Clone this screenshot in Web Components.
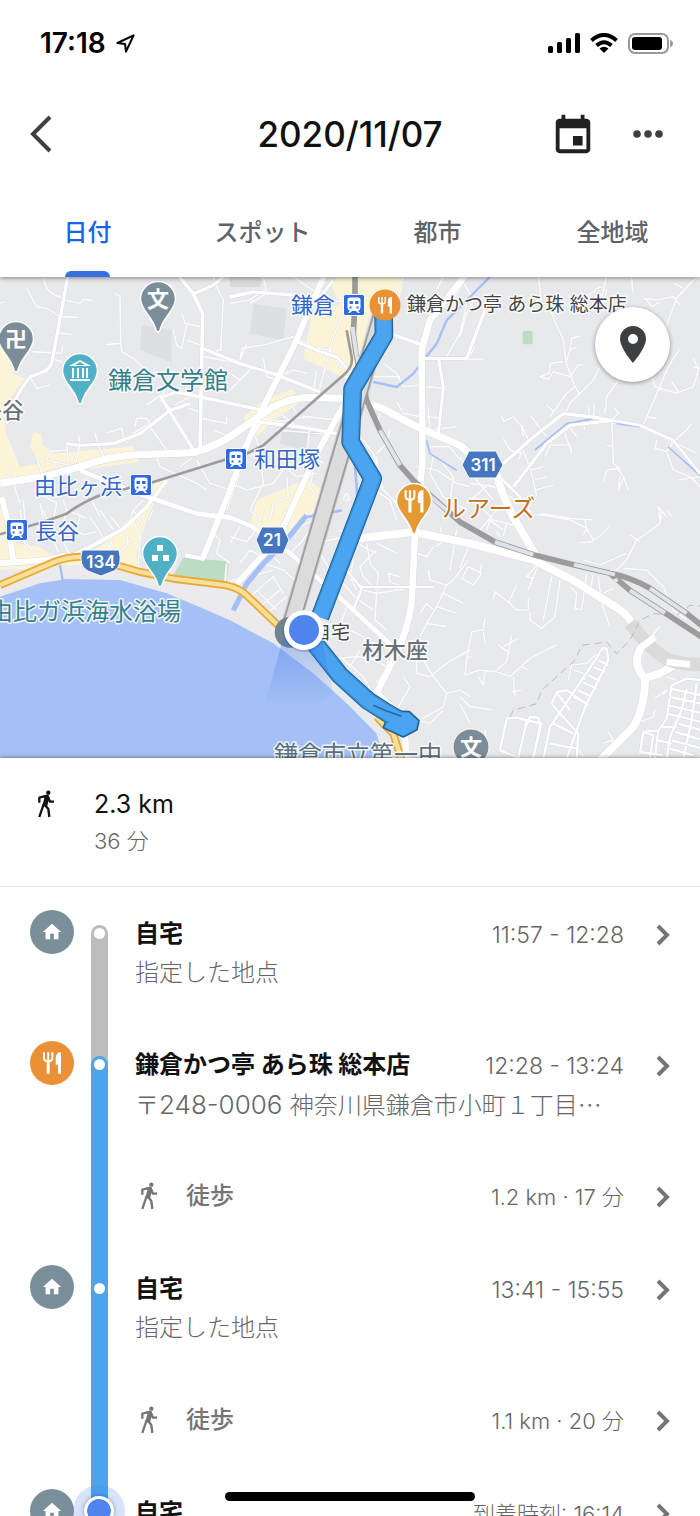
<!DOCTYPE html>
<html lang="ja">
<head>
<meta charset="utf-8">
<meta name="viewport" content="width=device-width, initial-scale=1">
<title>2020/11/07</title>
<style>
    html, body {
        height: 100%;
        margin: 0;
    }

    body {
        background: #fff;
        color: #111;
        font-family: Inter, "Noto Sans CJK JP", sans-serif;
        overflow: hidden;
    }

    .postcode {
        font-size: 26px;
    }

    /* the Japanese face centres the dots on the line */
    .dots {
        font-family: "Noto Sans CJK JP", sans-serif;
    }
</style>
</head>
<body>

<timeline-app>
    <status-bar slot="top" time="17:18"></status-bar>
    <title-bar slot="top">2020/11/07</title-bar>
    <tab-bar slot="top" tabs="日付,スポット,都市,全地域" active="0"></tab-bar>

    <route-map slot="map"></route-map>

    <trip-summary>
        2.3 km
        <span slot="time">36 分</span>
    </trip-summary>

    <trip-row icon="home" rail="gray">
        自宅
        <span slot="sub">指定した地点</span>
        <span slot="info">11:57 - 12:28</span>
    </trip-row>
    <trip-row icon="food" before="gray" rail="blue">
        鎌倉かつ亭 あら珠 総本店
        <span slot="sub">〒<span class="postcode">248-0006 </span>神奈川県鎌倉市小町１丁目<span class="dots">…</span></span>
        <span slot="info">12:28 - 13:24</span>
    </trip-row>
    <trip-row walk before="blue" rail="blue">
        徒歩
        <span slot="info">1.2 km · 17 分</span>
    </trip-row>
    <trip-row icon="home" before="blue" rail="blue">
        自宅
        <span slot="sub">指定した地点</span>
        <span slot="info">13:41 - 15:55</span>
    </trip-row>
    <trip-row walk before="blue" rail="blue">
        徒歩
        <span slot="info">1.1 km · 20 分</span>
    </trip-row>
    <trip-row icon="home" before="blue" current>
        自宅
        <span slot="sub">指定した地点</span>
        <span slot="info">到着時刻: 16:14</span>
    </trip-row>
</timeline-app>

<script>
    const ICONS = {
        walk: '<svg viewBox="-18 -2 84 84"><circle cx="31" cy="6" r="6.500"/><g fill="none" stroke="currentColor" stroke-width="7" stroke-linejoin="round"><path d="M28 15L4 21V36"/><path d="M29 17L36 33H48"/><path d="M17 40L4 79"/><path d="M21 43L31 55L34 79"/></g><path d="M16 14L31 12L34 21L27 48L13 46L19 22Z"/></svg>',
        home: '<svg viewBox="0 0 24 24"><path d="M10 20v-6h4v6h5v-8h3L12 3 2 12h3v8z"/></svg>',
        food: '<svg viewBox="0 0 54 65"><path d="M3 1V19Q3 28 15.500 28Q28 28 28 19V1M15.500 1V28" fill="none" stroke="currentColor" stroke-width="6"/><path d="M11 26h9v39h-9zM54 0V65H45V38H38V18Q38 2 54 0Z"/></svg>',
        back: '<svg viewBox="0 0 22 38"><path d="M20 2L3 19L20 36" fill="none" stroke="currentColor" stroke-width="4"/></svg>',
        calendar: '<svg viewBox="0 -1 24 24"><path d="M17 12h-5v5h5v-5zM16 1v2H8V1H6v2H5c-1.110 0-1.990.9-1.990 2L3 19c0 1.100.890 2 2 2h14c1.100 0 2-.9 2-2V5c0-1.100-.9-2-2-2h-1V1h-2zm3 18H5V8h14v11z"/></svg>',
        more: '<svg viewBox="0 0 30 8"><circle cx="4" cy="4" r="3.800"/><circle cx="15" cy="4" r="3.800"/><circle cx="26" cy="4" r="3.800"/></svg>',
        chevron: '<svg viewBox="0 0 14 22"><path d="M2 2L11 11L2 20" fill="none" stroke="currentColor" stroke-width="4"/></svg>',
        pin: '<svg viewBox="0 0 26 37"><path fill-rule="evenodd" d="M13 0A13 13 0 0 0 0 13C0 22 13 37 13 37S26 22 26 13A13 13 0 0 0 13 0ZM13 8A5 5 0 1 1 13 18A5 5 0 0 1 13 8Z"/></svg>',
        arrow: '<svg viewBox="0 0 20 20"><path d="M1.500 9.500L18.500 1.500L10.500 18.500L9.500 10.500Z" fill="none" stroke="currentColor" stroke-width="2.200" stroke-linejoin="round"/></svg>',
        signal: '<svg viewBox="0 0 32 20"><rect y="13" width="5" height="7" rx="1.500"/><rect x="9" y="9" width="5" height="11" rx="1.500"/><rect x="18" y="5" width="5" height="15" rx="1.500"/><rect x="27" width="5" height="20" rx="1.500"/></svg>',
        wifi: '<svg viewBox="0 0 28 20"><g fill="none" stroke="currentColor" stroke-width="4"><path d="M1.500 7.500Q14-3.500 26.500 7.500"/><path d="M6.500 12.500Q14 6 21.500 12.500"/></g><path d="M9.500 15.500Q14 12 18.500 15.500L14 20Z"/></svg>',
        battery: '<svg viewBox="0 0 45 21"><rect x="1" y="1" width="39" height="19" rx="6" fill="none" stroke="#999" stroke-width="2"/><rect x="4" y="4" width="30" height="13" rx="3"/><path d="M42 7Q45 8 45 10.500T42 14Z" fill="#999"/></svg>'
    };

    // Simple icon, sized with --size (width) and coloured by the text colour
    class AppIcon extends HTMLElement {
        connectedCallback() {
            if (this.shadowRoot) return;
            this.attachShadow({ mode: 'open' });
            this.shadowRoot.innerHTML = `
                <style>
                    :host { display: inline-flex; width: var(--size, 24px); flex: none; }
                    svg { display: block; width: 100%; height: auto; fill: currentColor; }
                </style>
                ${ICONS[this.getAttribute('name')] || ''}
            `;
        }
    }

    class TimelineApp extends HTMLElement {
        constructor() {
            super();
            this.attachShadow({ mode: 'open' });
            this.shadowRoot.innerHTML = `
                <style>
                    :host {
                        display: flex;
                        flex-direction: column;
                        height: 100vh;
                        position: relative;
                    }

                    header {
                        position: relative;
                        z-index: 1;
                        background: #fff;
                        box-shadow: 0 1px 5px rgba(0, 0, 0, 0.45);
                        flex: none;
                    }

                    .map {
                        flex: none;
                    }

                    main {
                        position: relative;
                        flex: 1;
                        min-height: 0;
                        overflow-y: auto;
                        scrollbar-width: none;
                        background: #fff;
                        box-shadow: 0 0 4px rgba(0, 0, 0, 0.5);
                    }

                    .home-bar {
                        position: absolute;
                        bottom: 15px;
                        left: 50%;
                        width: 250px;
                        height: 9px;
                        margin-left: -125px;
                        border-radius: 5px;
                        background: #000;
                    }
                </style>
                <header><slot name="top"></slot></header>
                <div class="map"><slot name="map"></slot></div>
                <main><slot></slot></main>
                <div class="home-bar"></div>
            `;
        }
    }

    class StatusBar extends HTMLElement {
        connectedCallback() {
            if (this.shadowRoot) return;
            this.attachShadow({ mode: 'open' });
            this.shadowRoot.innerHTML = `
                <style>
                    :host {
                        display: flex;
                        align-items: center;
                        gap: 10px;
                        height: 86px;
                        padding: 0 27px 0 40px;
                        color: #000;
                    }

                    .time {
                        font-size: 28px;
                        font-weight: 600;
                        margin-right: auto;
                        display: flex;
                        align-items: center;
                        gap: 10px;
                    }
                </style>
                <span class="time">${this.getAttribute('time')}<app-icon name="arrow" style="--size: 19px"></app-icon></span>
                <app-icon name="signal" style="--size: 32px"></app-icon>
                <app-icon name="wifi" style="--size: 28px"></app-icon>
                <app-icon name="battery" style="--size: 45px"></app-icon>
            `;
        }
    }

    class TitleBar extends HTMLElement {
        constructor() {
            super();
            this.attachShadow({ mode: 'open' });
            this.shadowRoot.innerHTML = `
                <style>
                    :host {
                        display: grid;
                        grid-template-columns: 1fr auto 1fr;
                        align-items: center;
                        height: 96px;
                        padding: 0 30px;
                    }

                    h1 {
                        margin: 0;
                        font-size: 35px;
                        font-weight: 500;
                    }

                    button {
                        display: flex;
                        padding: 0;
                        border: 0;
                        background: none;
                        color: #3c4043;
                    }

                    .actions {
                        display: flex;
                        justify-content: flex-end;
                        align-items: center;
                        gap: 37px;
                        padding-right: 7px;
                    }

                    .calendar {
                        color: #202124;
                    }
                </style>
                <button aria-label="戻る"><app-icon name="back" style="--size: 22px"></app-icon></button>
                <h1><slot></slot></h1>
                <div class="actions">
                    <button class="calendar" aria-label="カレンダー"><app-icon name="calendar" style="--size: 46px"></app-icon></button>
                    <button aria-label="その他"><app-icon name="more" style="--size: 30px"></app-icon></button>
                </div>
            `;
        }
    }

    class TabBar extends HTMLElement {
        connectedCallback() {
            if (this.shadowRoot) return;
            const active = Number(this.getAttribute('active'));
            const tabs = this.getAttribute('tabs').split(',');
            this.attachShadow({ mode: 'open' });
            this.shadowRoot.innerHTML = `
                <style>
                    :host {
                        display: grid;
                        grid-template-columns: repeat(4, 1fr);
                        height: 95px;
                    }

                    button {
                        display: flex;
                        flex-direction: column;
                        align-items: center;
                        justify-content: space-between;
                        padding: 31px 0 0;
                        border: 0;
                        background: none;
                        color: #5f6368;
                        font: 500 24px/40px Inter, "Noto Sans CJK JP", sans-serif;
                    }

                    [aria-selected="true"] {
                        color: #1a66e0;
                    }

                    [aria-selected="true"]::after {
                        content: "";
                        width: 45px;
                        height: 6px;
                        border-radius: 6px 6px 0 0;
                        background: #356fe0;
                    }
                </style>
                ${tabs.map((tab, i) => `<button role="tab" aria-selected="${i === active}">${tab}</button>`).join('')}
            `;
        }
    }

    class TripSummary extends HTMLElement {
        constructor() {
            super();
            this.attachShadow({ mode: 'open' });
            this.shadowRoot.innerHTML = `
                <style>
                    :host {
                        display: flex;
                        gap: 34px;
                        padding: 27px 32px;
                        border-bottom: 1px solid #e3e3e3;
                    }

                    app-icon {
                        margin-top: 5px;
                        height: 28px;
                    }

                    .distance {
                        font-size: 25px;
                        line-height: 39px;
                    }

                    .time {
                        font-size: 22px;
                        line-height: 35px;
                        font-weight: 300;
                        color: #666;
                    }
                </style>
                <app-icon name="walk" style="--size: 28px"></app-icon>
                <div>
                    <div class="distance"><slot></slot></div>
                    <div class="time"><slot name="time"></slot></div>
                </div>
            `;
        }
    }

    class TripRow extends HTMLElement {
        connectedCallback() {
            if (this.shadowRoot) return;
            const icon = this.getAttribute('icon');
            const walk = this.hasAttribute('walk');
            const current = this.hasAttribute('current');
            this.attachShadow({ mode: 'open' });
            this.shadowRoot.innerHTML = `
                <style>
                    :host {
                        --gray: #bdbdbd;
                        --blue: #4ba5ee;
                        display: block;
                    }

                    a {
                        display: flex;
                        height: 131px;
                        padding: 0 30px;
                        color: inherit;
                        text-decoration: none;
                    }

                    :host([walk]) a {
                        height: 93px;
                    }

                    .badge {
                        display: flex;
                        align-items: center;
                        justify-content: center;
                        flex: none;
                        width: 44px;
                        height: 44px;
                        margin-top: 23px;
                        border-radius: 50%;
                        color: #fff;
                        background: #7b8f9b;
                    }

                    .badge.food {
                        background: #ea9035;
                    }

                    .badge.none {
                        visibility: hidden;
                    }

                    .rail {
                        display: flex;
                        flex-direction: column;
                        flex: none;
                        width: 17px;
                        margin: 0 27px 0 17px;
                    }

                    .before {
                        height: 46px;
                        background: var(--before, transparent);
                    }

                    .after {
                        position: relative;
                        flex: 1;
                        margin-top: -8px;
                        border-radius: 9px 9px 0 0;
                        background: var(--rail, transparent);
                    }

                    :host([before="gray"]) { --before: var(--gray); }
                    :host([before="blue"]) { --before: var(--blue); }
                    :host([rail="gray"]) { --rail: var(--gray); }
                    :host([rail="blue"]) { --rail: var(--blue); }

                    .dot {
                        position: absolute;
                        top: 3px;
                        left: 3px;
                        width: 11px;
                        height: 11px;
                        border-radius: 50%;
                        background: #fff;
                    }

                    .dot.now {
                        top: -8px;
                        left: -7px;
                        width: 24px;
                        height: 24px;
                        border: 3px solid #fff;
                        background: #4f83ee;
                        box-shadow: 0 0 0 11px rgba(79, 131, 238, 0.22), 0 0 5px rgba(0, 0, 0, 0.4);
                        background-clip: padding-box;
                    }

                    .text {
                        display: grid;
                        grid-template-columns: minmax(0, 1fr) auto;
                        grid-auto-rows: 39px;
                        flex: 1;
                        min-width: 0;
                        padding-top: 27px;
                        line-height: 39px;
                        white-space: nowrap;
                    }

                    .name {
                        display: flex;
                        align-items: center;
                        gap: 23px;
                        font-size: 24px;
                        font-weight: 700;
                    }

                    :host([walk]) .name {
                        color: #757575;
                        font-weight: 500;
                    }

                    .info {
                        font-size: 23px;
                        line-height: 43px;
                        color: #666;
                        font-weight: 300;
                    }

                    :host([walk]) .info,
                    :host([current]) .info {
                        font-size: 22px;
                    }

                    .sub {
                        grid-column: 1 / -1;
                        font-size: 24px;
                        font-weight: 300;
                        color: #666;
                        overflow: hidden;
                    }

                    .chevron {
                        align-self: flex-start;
                        margin: 37px 0 0 32px;
                        color: #757575;
                    }
                </style>
                <a href="#">
                    <span class="badge ${icon || 'none'}">
                        ${icon ? `<app-icon name="${icon}" style="--size: ${icon === 'food' ? 18 : 22}px"></app-icon>` : ''}
                    </span>
                    <span class="rail">
                        <span class="before"></span>
                        <span class="after">${walk ? '' : `<span class="dot ${current ? 'now' : ''}"></span>`}</span>
                    </span>
                    <span class="text">
                        <span class="name">${walk ? '<app-icon name="walk" style="--size: 28px"></app-icon>' : ''}<span><slot></slot></span></span>
                        <span class="info"><slot name="info"></slot></span>
                        ${walk ? '' : '<span class="sub"><slot name="sub"></slot></span>'}
                    </span>
                    <app-icon class="chevron" name="chevron" style="--size: 14px"></app-icon>
                </a>
            `;
        }
    }

    // ---- map data, three units to the pixel ----

    const MAIN_ROADS = [
        [22, 'M0 619L130 599L240 569Q330 537 420 533L580 527Q660 504 710 465L790 409Q850 364 930 361L1030 364Q1110 380 1150 395L1250 449L1380 505L1445 560'],
        [24, 'M1490 590Q1500 640 1540 720L1610 840'],
        [24, 'M1060 786L1240 765L1410 799L1600 849Q1640 870 1720 910L1860 999Q1890 1020 1900 1050'],
        [20, 'M1400 -10L1290 129L1265 220L1267 560L1245 769L1235 979Q1225 1050 1190 1129L1130 1249L1210 1319L1220 1443'],
        [24, 'M1940 1089Q1885 1150 1935 1205Q1935 1290 1900 1350L1800 1450M1930 1205L1980 1189L2030 1162L2070 1160'],
        [18, 'M975 -10L880 210L780 409L730 530L690 640L610 840'],
        [18, 'M1040 370L950 530L860 729L830 790L710 920'],
        [10, 'M205 -10L155 260L140 280L90 300Q40 360 20 440'],
        [11, 'M530 -10L580 50L608 110L600 520'],
        [10, 'M480 355L585 527M490 359L530 345L720 385L790 400'],
        [10, 'M580 50L640 25L680 -10M610 215L720 260L820 290L960 345'],
        [10, 'M200 500L240 505L340 500L420 470L510 400L570 380'],
        [14, 'M240 580L430 655L590 710L690 722L750 745L870 829L1060 999L1180 1110'],
        [18, 'M0 859L130 850L200 835M5 660L25 740L40 855'],
        [12, 'M210 840L280 805L370 755L440 690L500 610M655 720L610 845L555 835'],
        [10, 'M690 60L760 45L960 60L1000 10M880 190L950 220L1010 240L1090 330'],
        [10, 'M1170 170L1270 205M1265 245L1400 244L1470 60'],
        [10, 'M1510 560L1600 480L1690 410L1780 420L1838 430M1540 630L1640 500L1710 445L1838 430'],
        [10, 'M690 570L780 440M780 435L900 450L1010 470'],
        [9, 'M1315 240L1330 330L1315 470'],
        [8, 'M1838 430L1920 445L2020 490L2100 590M1500 600L1560 660L1600 720'],
        [8, 'M1080 930L1300 930M1060 999L1085 935L1040 880L1010 850']
    ];

    // lanes, one list per sheet: [left, top, lines]
    const LANES = [
        [0, -21, `M80 55L110 110L140 115L180 140L235 142 M130 20Q135 70 180 80L195 90L240 100L250 88L280 92 M170 188L215 194
            M345 70L360 80L362 220L318 224 M362 220L365 245L400 265L450 310 M95 245L185 250L188 225 M150 265L185 275
            M90 320L110 355L150 345 M440 405L490 370 M500 350L480 390L520 420 M525 405L580 375 M545 130L555 160L610 172
            M520 180L530 225L545 235L560 165 M560 210L600 225 M640 20L655 60L670 90L662 240L640 245 M610 260L690 275
            M660 290L720 330 M605 445L680 460L680 440 M565 415L600 425 M320 490L365 475L370 505 M405 470L410 445L440 445L450 460L400 490
            M450 470L500 540 M200 520L205 580 M235 495L240 520L225 590L140 570L150 545L200 540 M165 575L170 600
            M110 560L125 610L240 600 M310 535L345 560L350 580 M285 490L300 540L320 570 M20 600L40 640L60 700
            M70 690L75 750 M120 700L130 745 M100 660L170 700L160 750 M190 690L200 720L260 745 M270 680L300 740
            M430 690L400 720L390 750 M470 560L480 590L590 640L620 660 M590 570L630 640L690 660 M540 590L575 565
            M700 560L720 610L680 720 M0 100L15 95 M640 480L690 500L720 470`],
        [690, -21, `M100 20L110 70L60 100 M0 100L60 90L100 60L190 80 M190 20L290 90L340 95 M30 270L35 235L100 225L190 200
            M50 220L30 270 M100 265L110 320L130 325 M0 360L70 290 M140 320L190 300L230 310 M190 200L260 235L300 240
            M340 130L310 200L265 370 M300 240L330 290L360 300 M260 300L250 370 M0 400L80 420 M60 440L150 455L230 440L320 450
            M130 400L180 395L200 430 M150 430L200 470 M70 480L90 540L60 560 M140 480L320 495 M240 470L230 550L280 580
            M150 580L200 620L260 610 M0 640L50 660L130 640L160 600 M90 560L100 640L60 720L90 750 M170 620L175 680L130 700L120 750
            M250 600L240 650L270 690L230 750 M460 280L500 310L520 350L570 345 M430 320L510 320 M500 395L520 430L570 440
            M510 440L560 470 M450 430L440 480 M480 480L470 520L440 550 M390 500L430 550L460 660 M440 560L450 650L500 700
            M590 440L640 445 M590 350L640 355 M600 480L680 470 M595 410L600 480 M640 20L610 80L660 100L700 40
            M650 260L690 190L710 100 M560 590L620 600L680 640L720 650 M610 560L600 610L640 680L710 720 M600 530L660 530L690 570
            M400 640L480 690L500 750 M340 690Q350 650 358 690L345 692 M520 20L500 60L480 200 M630 570L670 620L660 700`],
        [1380, -21, `M235 20L245 100L275 130L290 165L310 210L318 275L345 350L360 375 M318 275L330 240L335 205L360 198 M330 240L350 232
            M310 275L270 280L268 310L240 320L265 328L280 305L330 320L355 285L370 285 M345 350L320 370L270 440 M260 405L280 425
            M420 290L400 330L330 400L315 430 M475 330L440 380L435 430 M425 80L440 20 M385 80L430 100L440 60L420 50L380 80
            M515 20L518 65 M715 20L690 40L650 85L615 180 M550 85L590 90L640 80L660 105 M640 40L670 55 M555 85L575 110L600 95
            M660 235L625 290L550 465 M575 320L585 350L650 370L700 350L715 300L700 265 M635 335L655 365 M700 290L720 295
            M560 440L590 445 M465 415L475 430L455 450L460 580L480 595L440 600L430 635 M470 590L490 620L505 660 M490 625L475 660L480 620
            M440 525L460 530 M385 405L388 435 M402 400L402 435 M540 470L640 515L680 480L695 460 M590 510L585 535L620 545L640 515L710 550
            M620 545L640 600L690 620L720 650 M655 630L720 620 M210 435L260 500 M185 465L205 510 M125 435L130 455L160 440L185 470L190 500
            M130 505L150 540L185 550L175 570 M335 550L330 525L270 525L255 560 M330 470L350 500 M310 480L335 545 M375 460L372 480
            M190 540L215 610L230 680 M225 630L260 620 M215 600L250 590 M225 660L280 645 M0 20L40 90L20 130L0 200 M0 268L70 268 M25 265L45 230
            M0 560L40 620L100 690 M30 640L100 650L180 700 M20 700L90 640 M240 730L330 745L400 750 M600 750L595 710L620 740`],
        [0, 699, `M60 0L75 100L110 130 M130 0L160 80L175 130 M0 90L30 60 M240 20L230 60L250 75L290 65 M270 20L330 115L335 90
            M330 20L380 75L385 110 M300 0L340 60 M400 30L420 80L415 170 M390 90L360 130 M200 0L180 80L210 135
            M400 0L430 50 M460 0L445 30 M640 70L660 90L650 130L690 160 M720 50L690 100 M680 160L675 220 M720 200L690 215`],
        [690, 699, `M0 80L50 95L80 60L100 0 M30 160L60 120L120 150 M60 200L130 180 M100 160L160 180L240 250 M60 260L130 200L160 250
            M80 240L140 300 M90 290L150 240 M110 310L170 260 M160 0L190 60L250 30 M180 130L215 95L240 60 M120 130L150 160
            M210 170L200 240 M250 100L350 80L390 60 M270 130L300 180 M330 60L400 110L440 130 M340 220L380 265L430 300
            M350 290L330 350L300 380 M395 240L440 250L530 235 M410 100L420 160L445 190L440 240L400 200L390 170L440 120
            M440 100L500 130 M540 110L545 120 M520 230L480 215L475 190L510 200 M440 245L435 330L470 360 M380 240L360 200L370 150
            M595 180L600 210L650 225L670 210L715 150 M650 225L620 290L590 340L570 380 M620 290L680 310 M640 250L700 280
            M590 340L650 350 M610 300L590 280L570 310 M560 130L590 140L610 110 M630 50L640 90L620 110 M680 60L660 180
            M580 450L610 500L650 550L640 590L570 630 M650 550L690 540L720 560 M480 400L470 470L440 520 M390 420L360 470L320 490
            M330 440L400 500L430 560L410 590 M280 450L380 440L440 450L480 480 M340 350L400 380L420 440 M500 430L560 450L560 490L600 500L650 460L720 420
            M440 550L500 600L540 530L520 500 M560 630L600 640L640 600 M690 580L720 640`],
        [1380, 699, `M60 60L110 0 M80 60L90 30L130 60 M110 65L120 80 M130 80L140 40L170 50 M70 0L100 30L160 45 M160 10L240 15L330 30L380 55L400 90L430 70L450 45
            M375 30L380 55L370 75 M360 98L400 95 M605 0L600 40L560 70L530 90L500 150L470 180L400 185 M510 75L540 95 M620 0L635 20
            M0 175L25 110 M5 205L25 170L65 190L40 225Z M65 160L60 190 M100 270L105 245L150 280L170 300L205 300L205 265 M145 280L170 225
            M235 160L200 200L220 205 M235 165L205 240 M275 200L250 330 M300 210L285 320L245 355L210 330L210 305 M380 190L365 300L345 295L350 250L330 230
            M370 150L420 165L500 130 M415 200L425 280L450 350 M430 250L460 235 M400 195L390 240L370 240 M490 175L560 180L610 230L640 300L680 330
            M75 325L70 360L35 365L20 450L15 495L60 480L110 485L150 500L210 445L290 405 M70 365L75 400 M20 445L35 440 M110 480L140 455L155 375
            M130 410L175 385 M115 405L150 430 M55 500L70 525L75 480 M160 500L165 560 M155 545L185 540 M185 470L205 480 M0 560L30 590L100 600
            M325 510L335 465L380 460L400 440L440 415 M340 480L370 490L375 510 M600 350L560 395 M585 565L620 540L610 555 M530 640L580 620L585 600
            M430 700L460 690L445 665 M460 690L470 720 M350 710L370 740 M75 660L80 700 M620 500L650 510`]
    ];

    // the terraced housing blocks in the lower right
    const BLOCKS = `M1500 1420L1520 1325L1550 1322L1625 1340L1598 1445M1500 1420L1560 1443M1555 1322L1580 1332L1555 1443
        M1580 1345L1590 1320L1615 1322L1620 1345L1600 1445M1630 1445L1650 1350L1795 1135Q1805 1105 1820 1115L1825 1150L1755 1290L1700 1445
        M1655 1280L1670 1245L1700 1240L1765 1285M1655 1280L1735 1370L1730 1445M1672 1250L1710 1300M1650 1400L1730 1415M1660 1340L1720 1370
        M1795 1150L1825 1165M1780 1170L1815 1185M1765 1195L1800 1212M1750 1217L1790 1235M1735 1240L1775 1258M1720 1260L1762 1280
        M1920 1430L1930 1365L1975 1360L2000 1325L2015 1225L2060 1205L2110 1210M1930 1365L1960 1375L1950 1443
        M1975 1360L1965 1443M2060 1235L2045 1300L2010 1380L2000 1445M2010 1235L2105 1255M2010 1260L2105 1280M2005 1285L2105 1308
        M2002 1310L2105 1335M2035 1340L2105 1360M2025 1365L2105 1388M2015 1390L2105 1414M2010 1415L2080 1435M2090 1220L2075 1330L2050 1443M1985 1350L2030 1350M1975 1390L2015 1400M1920 1425L1990 1435`;

    const RAIL = 'M1065 -5L1065 80L1060 170L1068 230L1100 370L1140 460L1200 565L1240 610L1380 735L1485 795L1600 833L1720 863L1830 889Q1890 900 1950 934L2060 1009L2110 1050';
    const RAIL_BRANCH = 'M1830 889L1890 940L1990 1005L2110 1083';
    const ENODEN = 'M0 772L130 735L200 710Q240 680 300 655L460 615L670 550L740 530L790 505L1030 295Q1060 270 1055 240L1040 160';
    const HIGHWAY = 'M0 924L150 860Q230 825 300 850L420 885L520 905L680 925Q720 935 740 955L850 1060M1130 1320L1180 1370L1205 1450';
    const ROUTE = 'M1150 80L1152 175L1058 335L1052 495L1118 605L960 1020M912 1059L1020 1195L1105 1272L1160 1307L1205 1333';

    const pin = (x, y, color, inner) => `
        <g transform="translate(${x} ${y})">
            <path d="M-17.500 0A17.500 17.500 0 1 1 17.500 0C17.500 11 5 18 2 31Q0 35-2 31C-5 18-17.500 11-17.500 0Z" fill="${color}" stroke="#fff" stroke-width="1.500"/>
            ${inner}
        </g>`;

    const station = (x, y) => `
        <g transform="translate(${x} ${y})">
            <rect x="-10.500" y="-10.500" width="21" height="21" rx="2" fill="#2e6ae0" stroke="#fff"/>
            <path d="M-4-7.500H4Q6.500-7.500 6.500-5V2.500Q6.500 5 4 5.500L6 8H4L2 6H-2L-4 8H-6L-4 5.500Q-6.500 5-6.500 2.500V-5Q-6.500-7.500-4-7.500Z" fill="#fff"/>
            <path d="M-4.500-4H-1V-1H-4.500ZM1-4H4.500V-1H1ZM-4.500 1.500H-2.500V3.500H-4.500ZM2.500 1.500H4.500V3.500H2.500Z" fill="#2e6ae0"/>
        </g>`;

    const cutlery = (x, y, size) => `
        <g transform="translate(${x} ${y}) scale(${size})" fill="#fff">
            <path d="M-24-31V-13Q-24-4-11.500-4Q1-4 1-13V-31M-11.500-31V-4" fill="none" stroke="#fff" stroke-width="6"/>
            <path d="M-16-6h9v39h-9zM27-32V33H18V6H11V-14Q11-30 27-32Z"/>
        </g>`;

    class RouteMap extends HTMLElement {
        constructor() {
            super();
            this.attachShadow({ mode: 'open' });
            this.shadowRoot.innerHTML = `
                <style>
                    :host {
                        display: block;
                        position: relative;
                    }

                    svg {
                        display: block;
                        width: 100%;
                        height: auto;
                        background: #e8e9ed;
                    }

                    .line {
                        fill: none;
                        stroke-linejoin: round;
                    }

                    text {
                        font-family: Inter, "Noto Sans CJK JP", sans-serif;
                        font-size: 24px;
                        fill: #357f8c;
                        paint-order: stroke;
                        stroke: rgba(255, 255, 255, 0.85);
                        stroke-width: 3px;
                        stroke-linejoin: round;
                    }

                    .station { font-size: 22px; fill: #3467c8; }
                    .place { font-size: 19px; fill: #444; }
                    .area { font-size: 22px; font-weight: 500; fill: #687079; }
                    .school { fill: #5c6f7b; }
                    .shop { fill: #c4701a; }
                    .sign { font-size: 17px; font-weight: 600; fill: #fff; stroke: none; text-anchor: middle; }
                    .glyph { font-size: 22px; font-weight: 700; fill: #fff; stroke: none; text-anchor: middle; }

                    button {
                        position: absolute;
                        top: 30px;
                        right: 30px;
                        display: flex;
                        align-items: center;
                        justify-content: center;
                        width: 75px;
                        height: 75px;
                        padding: 0;
                        border: 0;
                        border-radius: 50%;
                        background: #fff;
                        color: #3c4043;
                        box-shadow: 0 1px 4px rgba(0, 0, 0, 0.4);
                    }
                </style>
                <svg viewBox="0 0 700 481">
                    <defs>
                        <linearGradient id="beam" x1="0" y1="0" x2="0" y2="1">
                            <stop offset="0" stop-color="#3f78e8" stop-opacity=".4"/>
                            <stop offset=".9" stop-color="#3f78e8" stop-opacity="0"/>
                        </linearGradient>
                    </defs>
                    <g transform="scale(.33333)">
                        <!-- land use -->
                        <g fill="#fbf4d6">
                            <path d="M0 160L20 200L40 290L75 305L20 380L15 460L60 570L120 560L90 510L100 465L125 470L125 500L165 530L400 508L418 555L240 580L0 615Z"/>
                            <path d="M1020 -5H1215L1190 100L1110 110L1070 270L1050 310L910 245L935 115L1020 80L990 20Z"/>
                            <path d="M730 420L790 370L880 335L895 380L820 430L770 480Z"/>
                            <path d="M750 740L770 670L920 605L970 640L900 760L830 800Z"/>
                            <path d="M0 880V830L60 800L120 810L180 850L300 810L370 740L450 680L460 620L490 610L440 730L410 830L420 880L300 850L150 870Z"/>
                            <path d="M240 850L300 885L520 935L420 910L290 895L150 885Z"/>
                            <path d="M0 690L30 740L60 830L0 840Z"/>
                        </g>
                        <path d="M425 145L515 160V257L420 219Z M760 80L860 95L850 190L750 170Z M850 450L930 460L920 520L840 500Z" fill="#dedfe3"/>
                        <path d="M0 925L150 870L300 860L680 935L740 960L860 1070L960 1180L820 1099L620 1000L0 975Z" fill="#ebebed"/>
                        <path d="M550 842L687 853L680 915L520 895Z" fill="#bcdcc4"/>
                        <rect x="1568" y="161" width="30" height="41" rx="8" fill="#bcdcc4"/>
                        <path d="M1130 1080L1160 1100L1140 1130Z" fill="#bcdcc4"/>
                        <path d="M0 959L120 919L200 906L360 909L500 949L620 999L690 1030L820 1099L940 1189L1040 1279L1130 1370L1150 1443H0Z" fill="#a4c0f6"/>
                        <!-- roads: a thin casing, then the white surface -->
                        <g class="line">
                            ${LANES.map(([x, y, d]) => `<path transform="translate(${x} ${y})" d="${d}" stroke="#dcdde2" stroke-width="7"/>`).join('')}
                            ${LANES.map(([x, y, d]) => `<path transform="translate(${x} ${y})" d="${d}" stroke="#fbfbfc" stroke-width="5"/>`).join('')}
                        </g>
                        <!-- rivers -->
                        <g class="line" stroke="#a4c0f6">
                            <path stroke-width="16" d="M920 715L850 800L790 860L740 920L700 1000"/>
                            <path stroke-width="8" d="M1025 700L920 720M1060 500L1075 700"/>
                            <path stroke-width="7" d="M1470 -1L1410 60L1340 130L1310 200L1270 250L1240 290L1190 330L1120 315M180 864L188 909"/>
                            <path stroke-width="5" d="M1605 519L1700 440L1780 425M1850 440L1920 450M2005 510L2100 595M1280 490L1290 530L1370 580M0 660L30 730"/>
                        </g>
                        <g class="line">
                            ${MAIN_ROADS.map(([w, d]) => `<path d="${d}" stroke="#d2d4d9" stroke-width="${w + 2}"/>`).join('')}
                            ${MAIN_ROADS.map(([w, d]) => `<path d="${d}" stroke="#fff" stroke-width="${w}"/>`).join('')}
                            <path d="${BLOCKS}" stroke="#d9dbdf" stroke-width="10"/>
                            <path d="${BLOCKS}" stroke="#fff" stroke-width="7"/>
                            <path d="M1890 1038Q1960 1130 2010 1150Q2060 1165 2110 1162" stroke="#dadada" stroke-width="40"/>
                            <path d="M1925 1110L1965 1080M2000 1155L2070 1162" stroke="#fff" stroke-width="20"/>
                            <path d="M1530 1320L1540 1300L1610 1280L1625 1240L1725 1150L1745 1105L1820 1095L1850 1130L1890 1090L1920 1030L1960 1010L2030 1015L2070 985L2110 988" stroke="#bbb" stroke-width="3" stroke-dasharray="22 14"/>
                            <path d="${HIGHWAY}" stroke="#e9aa38" stroke-width="24"/>
                            <path d="${HIGHWAY}" stroke="#f8e09a" stroke-width="13"/>
                            <path d="${ENODEN}" stroke="#9c9c9c" stroke-width="8"/>
                            <path d="${RAIL}" stroke="#9c9c9c" stroke-width="17"/>
                            <path d="${RAIL_BRANCH}" stroke="#9c9c9c" stroke-width="17"/>
                            <path d="M1058 150L1060 170L1070 235L1085 300M1140 460L1200 565M1270 640L1350 708M1485 795L1600 833M1722 863L1845 893M1950 934L2060 1009M1845 905L1850 915M1890 940L1995 1008" stroke="#dfe3ea" stroke-width="12"/>
                        </g>
                        <path d="M690 0H780Q790 15 780 30H690Z" fill="#d8d9dc"/>
                        <!-- travelled lines -->
                        <g class="line">
                            <path d="M1155 80L868 1059" stroke="#8c8c8c" stroke-width="58" opacity=".35"/>
                            <path d="M1155 80L868 1059" stroke="#9d9d9d" stroke-width="52"/>
                            <path d="M1155 80L868 1059" stroke="#dcdcdc" stroke-width="42"/>
                            <circle cx="870" cy="1066" r="46" fill="#70838f"/>
                            <path d="${ROUTE}" stroke="#1f6296" stroke-width="56"/>
                            <path d="M1170 1302L1228 1304L1257 1331L1251 1358L1210 1380L1150 1352Z" fill="#4aa4ef" stroke="#1f6296" stroke-width="5"/>
                            <path d="${ROUTE}" stroke="#388fd6" stroke-width="50"/>
                            <path d="${ROUTE}" stroke="#4aa4ef" stroke-width="42"/>
                            <path d="M1170 1308L1226 1308L1252 1332L1247 1355L1210 1375L1165 1352Z" fill="#4aa4ef"/>
                            <path d="M1120 1285L1160 1302L1205 1318" stroke="#26699f" stroke-width="5"/>
                        </g>
                        <path d="M850 1080L790 1300Q900 1340 1000 1250L965 1080Z" fill="url(#beam)"/>
                    </g>

                    <!-- labels and markers -->
                    <text class="station" x="291" y="36">鎌倉</text>
                    <text class="place" x="407" y="34">鎌倉かつ亭 あら珠 総本店</text>
                    <text x="108" y="112">鎌倉文学館</text>
                    <text class="area" x="-20" y="141">長谷</text>
                    <text class="station" x="254" y="190">和田塚</text>
                    <text class="station" x="34" y="217">由比ヶ浜</text>
                    <text class="station" x="35" y="262">長谷</text>
                    <text class="shop" x="442" y="240">ルアーズ</text>
                    <text x="-11" y="343">由比ガ浜海水浴場</text>
                    <text class="place" x="312" y="362">自宅</text>
                    <text class="area" x="362" y="381">材木座</text>
                    <text class="school" x="274" y="486">鎌倉市立第一中</text>

                    ${station(354, 28)}
                    ${station(236, 182)}
                    ${station(141, 208)}
                    ${station(17, 253)}

                    <g fill="#4676c0" stroke="#fff">
                        <path d="M469 174H496L503 188L496 201H469L462 188Z"/>
                        <path d="M262 250H283L289 263L283 277H262L256 263Z"/>
                        <path d="M82 273H119Q123 289 114 294Q106 297 101 299Q95 297 88 294Q78 289 82 273Z"/>
                    </g>
                    <text class="sign" x="483" y="194">311</text>
                    <text class="sign" x="272" y="269">21</text>
                    <text class="sign" x="101" y="291">134</text>

                    ${pin(158, 22, '#7b8d98', '<text class="glyph" y="8">文</text>')}
                    ${pin(16, 62, '#7b8d98', '<text class="glyph" y="8">卍</text>')}
                    ${pin(80, 94, '#50b0c6', '<path d="M-11-5L0-11L11-5ZM-10 8H10V10H-10ZM-8-3H-6V7H-8ZM-3-3H-1V7H-3ZM2-3H4V7H2ZM6-3H8V7H6Z" fill="#fff"/><path d="M-5-6L0-9L5-6Z" fill="#50b0c6"/>')}
                    ${pin(160, 277, '#50b0c6', '<path d="M-3-9H3V-3H-3ZM-8 1H-2V7H-8ZM3 1H9V7H3Z" fill="#fff"/>')}
                    ${pin(414, 224, '#e39a33', cutlery(0, 0, .35))}
                    <circle cx="471" cy="470" r="18" fill="#7b8d98" stroke="#fff"/>
                    <text class="glyph" x="471" y="478">文</text>
                    <circle cx="385" cy="28" r="15.500" fill="#ea9035"/>
                    ${cutlery(385, 28, .26)}
                    <circle cx="304" cy="354" r="21" fill="#000" opacity=".15"/>
                    <circle cx="304" cy="353" r="20" fill="#fff"/>
                    <circle cx="304" cy="353" r="15" fill="#4f83ee"/>
                </svg>
                <button aria-label="スポットを表示"><app-icon name="pin" style="--size: 26px"></app-icon></button>
            `;
        }
    }

    customElements.define('app-icon', AppIcon);
    customElements.define('timeline-app', TimelineApp);
    customElements.define('status-bar', StatusBar);
    customElements.define('title-bar', TitleBar);
    customElements.define('tab-bar', TabBar);
    customElements.define('trip-summary', TripSummary);
    customElements.define('trip-row', TripRow);
    customElements.define('route-map', RouteMap);
</script>
</body>
</html>
